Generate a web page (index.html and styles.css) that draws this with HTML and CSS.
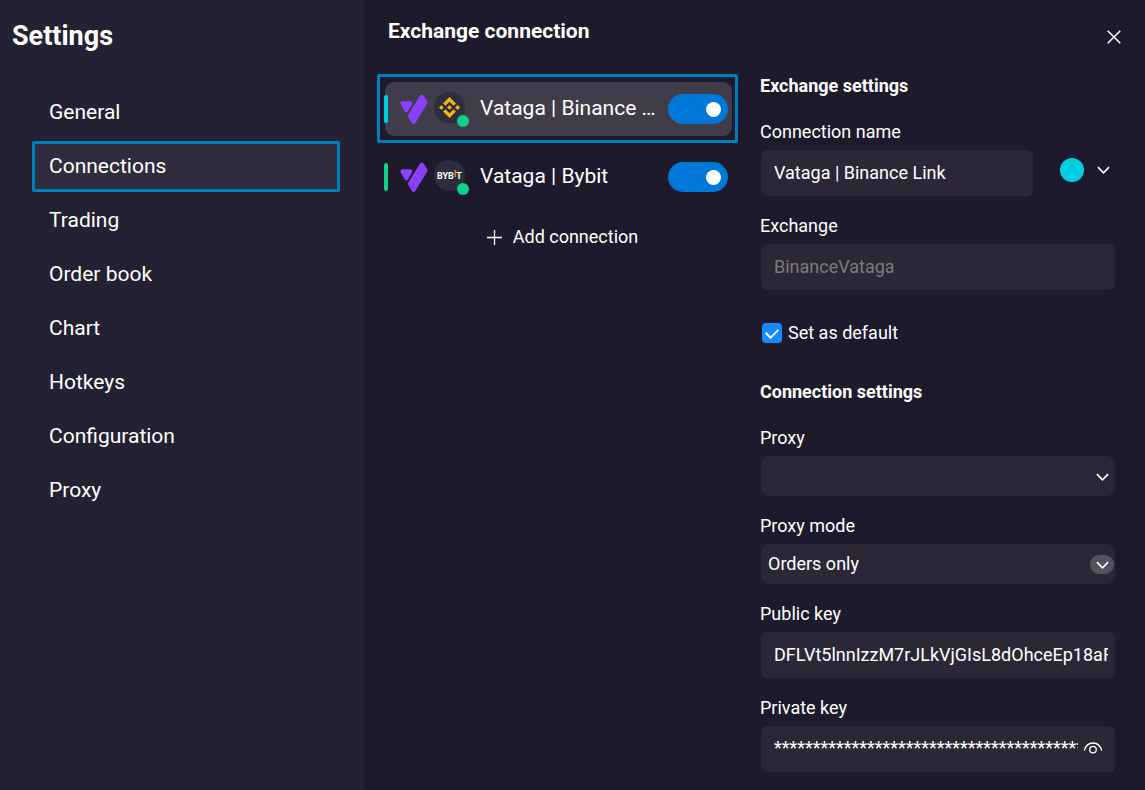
FILE: index.html
```html
<!DOCTYPE html>
<html lang="en">
<head>
    <meta charset="UTF-8">
    <meta name="viewport" content="width=device-width, initial-scale=1.0">
    <title>Settings</title>
    <link rel="stylesheet" href="styles.css">
</head>
<body>

<!-- Shared icons -->
<svg class="sprite" aria-hidden="true">
    <symbol id="vataga" viewBox="0 0 28 31">
        <g fill="#8a3ffc" stroke="#8a3ffc" stroke-width="4" stroke-linejoin="round">
            <path d="M2.400 9.200h8L6.400 16.400z"/>
            <path d="M21.800 2.600l3.700 5.800-11.900 19.600-3.700-6.200z"/>
        </g>
    </symbol>
    <symbol id="chevron" viewBox="0 0 14 8">
        <path d="M1 1l6 6 6-6" fill="none" stroke="#fff" stroke-width="1.8"/>
    </symbol>
</svg>

<div class="settings">
    <!-- Sidebar -->
    <aside class="sidebar">
        <h1>Settings</h1>
        <nav>
            <a href="#">General</a>
            <a href="#" class="active">Connections</a>
            <a href="#">Trading</a>
            <a href="#">Order book</a>
            <a href="#">Chart</a>
            <a href="#">Hotkeys</a>
            <a href="#">Configuration</a>
            <a href="#">Proxy</a>
        </nav>
    </aside>

    <main>
        <header>
            <h2>Exchange connection</h2>
            <button class="close" type="button" aria-label="Close">
                <svg width="14" height="14" viewBox="0 0 14 14"><path d="M.7.7l12.6 12.6M13.3.7L.7 13.3" stroke="#fff" stroke-width="1.5"/></svg>
            </button>
        </header>

        <div class="columns">
            <!-- Connection list -->
            <section class="connections">
                <div class="connection cyan selected">
                    <svg class="brand" aria-hidden="true"><use href="#vataga"/></svg>
                    <span class="avatar">
                        <svg width="21" height="21" viewBox="0 0 24 24" fill="#f0b90b"><path d="M16.624 13.9202l2.7175 2.7154-7.353 7.353-7.353-7.352 2.7175-2.7164 4.6355 4.6595 4.6356-4.6595zm4.6366-4.6366L24 12l-2.7154 2.7164L18.5682 12l2.6924-2.7164zm-9.272.001l2.7163 2.6914-2.7164 2.7174v-.001L9.2721 12l2.7164-2.7154zm-9.2722-.001L5.4088 12l-2.6914 2.6924L0 12l2.7164-2.7164zM11.9885.0115l7.353 7.329-2.7174 2.7154-4.6356-4.6356-4.6355 4.6595-2.7174-2.7154 7.353-7.353z"/></svg>
                    </span>
                    <label class="name" for="binance-on">Vataga | Binance Link</label>
                    <input class="switch" id="binance-on" type="checkbox" role="switch" checked>
                </div>
                <div class="connection green">
                    <svg class="brand" aria-hidden="true"><use href="#vataga"/></svg>
                    <span class="avatar">
                        <svg class="bybit" width="31" height="31" viewBox="0 0 31 31"><text x="3" y="19">BYB<tspan dy="-2" fill="#d99a1c">I</tspan><tspan dy="2">T</tspan></text></svg>
                    </span>
                    <label class="name" for="bybit-on">Vataga | Bybit</label>
                    <input class="switch" id="bybit-on" type="checkbox" role="switch" checked>
                </div>
                <button class="add" type="button">
                    <svg width="15" height="15" viewBox="0 0 15 15"><path d="M7.5 0v15M0 7.5h15" stroke="#fff" stroke-width="1.3"/></svg>
                    Add connection
                </button>
            </section>

            <!-- Settings of the selected connection -->
            <form class="details">
                <h3>Exchange settings</h3>

                <label for="conn-name">Connection name</label>
                <div class="field name-row">
                    <input class="box" id="conn-name" type="text" value="Vataga | Binance Link">
                    <button class="color" type="button" aria-label="Color">
                        <span class="swatch"></span>
                        <svg class="chevron"><use href="#chevron"/></svg>
                    </button>
                </div>

                <label for="exchange">Exchange</label>
                <div class="field">
                    <input class="box" id="exchange" type="text" value="BinanceVataga" disabled>
                </div>

                <div class="check-row">
                    <input id="default" type="checkbox" checked>
                    <label for="default">Set as default</label>
                </div>

                <h3>Connection settings</h3>

                <label for="proxy">Proxy</label>
                <div class="field select">
                    <select class="box" id="proxy"><option></option></select>
                    <span class="arrow"><svg class="chevron"><use href="#chevron"/></svg></span>
                </div>

                <label for="proxy-mode">Proxy mode</label>
                <div class="field select">
                    <select class="box" id="proxy-mode"><option>Orders only</option></select>
                    <span class="arrow hover"><svg class="chevron"><use href="#chevron"/></svg></span>
                </div>

                <label for="public-key">Public key</label>
                <div class="field">
                    <input class="box" id="public-key" type="text" value="DFLVt5lnnIzzM7rJLkVjGIsL8dOhceEp18aFq2">
                </div>

                <label for="private-key">Private key</label>
                <div class="field box secret">
                    <input id="private-key" type="text" value="************************************************">
                    <button type="button" aria-label="Show private key">
                        <svg width="20" height="14" viewBox="0 0 20 14" fill="none" stroke="#fff" stroke-width="1.3"><path d="M1.3 9.500C2.600 5 5.800 2 10 2s7.400 3 8.700 7.500"/><circle cx="10" cy="8.600" r="3.300"/></svg>
                    </button>
                </div>
            </form>
        </div>
    </main>
</div>

</body>
</html>
```

FILE: styles.css
```css
* {
    box-sizing: border-box;
}

body {
    margin: 0;
    background-color: #1d1a2b;
    color: #fff;
    font-family: Roboto, "Liberation Sans", sans-serif;
    font-size: 18px;
    line-height: 24px;
}

h1, h2, h3 {
    margin: 0;
}

button, input, select {
    margin: 0;
    padding: 0;
    border: 0;
    background: none;
    color: inherit;
    font: inherit;
}

.sprite {
    display: none;
}

.settings {
    display: grid;
    grid-template-columns: 364fr 781fr;
    min-height: 100vh;
}

/* Sidebar */
.sidebar {
    padding: 20px 24px 20px 12px;
    background-color: #242133;
}

h1 {
    font-size: 27px;
    line-height: 32px;
}

nav {
    display: flex;
    flex-direction: column;
    gap: 3px;
    margin: 35px 0 0 20px;
}

nav a {
    padding: 10px 14px 11px;
    border: 3px solid transparent;
    border-radius: 2px;
    color: #fff;
    font-size: 21px;
    text-decoration: none;
}

nav a.active {
    background-color: #302c3e;
    border-color: #007fc0;
}

/* Header */
header {
    display: flex;
    justify-content: space-between;
    height: 74px;
    padding: 18px 24px;
}

h2 {
    font-size: 21px;
    line-height: 26px;
}

.close {
    display: flex;
    align-items: center;
    height: 38px;
}

.columns {
    display: grid;
    grid-template-columns: 347fr 355fr;
    gap: 28px;
    padding: 0 30px 18px 21px;
}

/* Connection list */
.connections {
    display: flex;
    flex-direction: column;
    gap: 14px;
    min-width: 0;
    padding-top: 8px;
}

.connection {
    position: relative;
    display: flex;
    align-items: center;
    height: 54px;
    padding: 0 4px 0 15px;
    border-radius: 9px;
}

.connection::before {
    content: "";
    position: absolute;
    left: -1px;
    top: 13px;
    width: 4px;
    height: 28px;
    border-radius: 2px;
}

.cyan::before {
    background-color: #00cfdf;
}

.green::before {
    background-color: #0ecf8b;
}

.selected {
    background-color: #413c4a;
}

/* Focus frame around the selected row */
.selected::after {
    content: "";
    position: absolute;
    inset: -8px -6px -7px -8px;
    border: 3px solid #007fc0;
    border-radius: 2px;
    pointer-events: none;
}

.brand {
    width: 28px;
    height: 31px;
    margin-right: 6px;
}

.avatar {
    position: relative;
    display: flex;
    align-items: center;
    justify-content: center;
    width: 31px;
    height: 31px;
    margin: 0 15px 4px 0;
    border-radius: 50%;
    background-color: #2e2d40;
}

/* Online status dot */
.avatar::after {
    content: "";
    position: absolute;
    right: -4px;
    bottom: -4px;
    width: 12px;
    height: 12px;
    border-radius: 50%;
    background-color: #0ecf8b;
}

.bybit text {
    fill: #fff;
    font-size: 9px;
    font-weight: bold;
}

.name {
    flex: 1;
    min-width: 0;
    margin-right: 10px;
    padding-bottom: 2px;
    overflow: hidden;
    font-size: 21px;
    white-space: nowrap;
    text-overflow: ellipsis;
}

.switch {
    flex: none;
    display: flex;
    align-items: center;
    justify-content: flex-end;
    width: 60px;
    height: 30px;
    padding-right: 7px;
    border-radius: 15px;
    background-color: #0078d7;
    appearance: none;
}

.switch::before {
    content: "";
    width: 15px;
    height: 15px;
    border-radius: 50%;
    background-color: #fff;
}

.add {
    display: flex;
    align-items: center;
    justify-content: center;
    gap: 11px;
    height: 38px;
    padding-left: 8px;
}

/* Details form */
.details {
    display: flex;
    flex-direction: column;
    min-width: 0;
}

h3 {
    margin-bottom: 22px;
    font-size: 18px;
}

.details > label {
    margin-bottom: 6px;
}

.field {
    display: flex;
    margin: 0 0 18px 1px;
}

.box {
    flex: 1;
    min-width: 0;
    height: 46px;
    padding: 0 7px 2px 13px;
    border-radius: 6px;
    background-color: #2b2737;
}

.box:disabled {
    color: #7d7a80;
}

.name-row {
    gap: 27px;
}

.color {
    display: flex;
    align-items: center;
    gap: 13px;
    height: 40px;
    padding-right: 5px;
}

.swatch {
    width: 24px;
    height: 24px;
    border-radius: 50%;
    background-color: #00cfdf;
}

.chevron {
    width: 13px;
    height: 8px;
}

.check-row {
    display: flex;
    align-items: center;
    gap: 6px;
    margin: 13px 0 35px 2px;
}

.check-row input {
    display: grid;
    place-items: center;
    width: 20px;
    height: 20px;
    border-radius: 4px;
    background-color: #148aff;
    appearance: none;
}

.check-row input:checked::before {
    content: "";
    width: 6px;
    height: 10px;
    margin-bottom: 3px;
    border: solid #fff;
    border-width: 0 2px 2px 0;
    transform: rotate(45deg);
}

.select {
    position: relative;
}

.select .box {
    height: 40px;
    padding: 0 30px 0 7px;
    border-radius: 8px;
    appearance: none;
}

.arrow {
    position: absolute;
    right: 1px;
    top: 11px;
    display: flex;
    align-items: center;
    justify-content: center;
    width: 24px;
    height: 19px;
    border-radius: 9px;
    pointer-events: none;
}

.arrow.hover {
    background-color: #55525f;
}

.secret {
    flex: none;
    align-items: center;
    gap: 5px;
    margin-bottom: 0;
    padding-right: 12px;
}

.secret input {
    flex: 1;
    min-width: 0;
}

.secret button {
    display: flex;
}
```
